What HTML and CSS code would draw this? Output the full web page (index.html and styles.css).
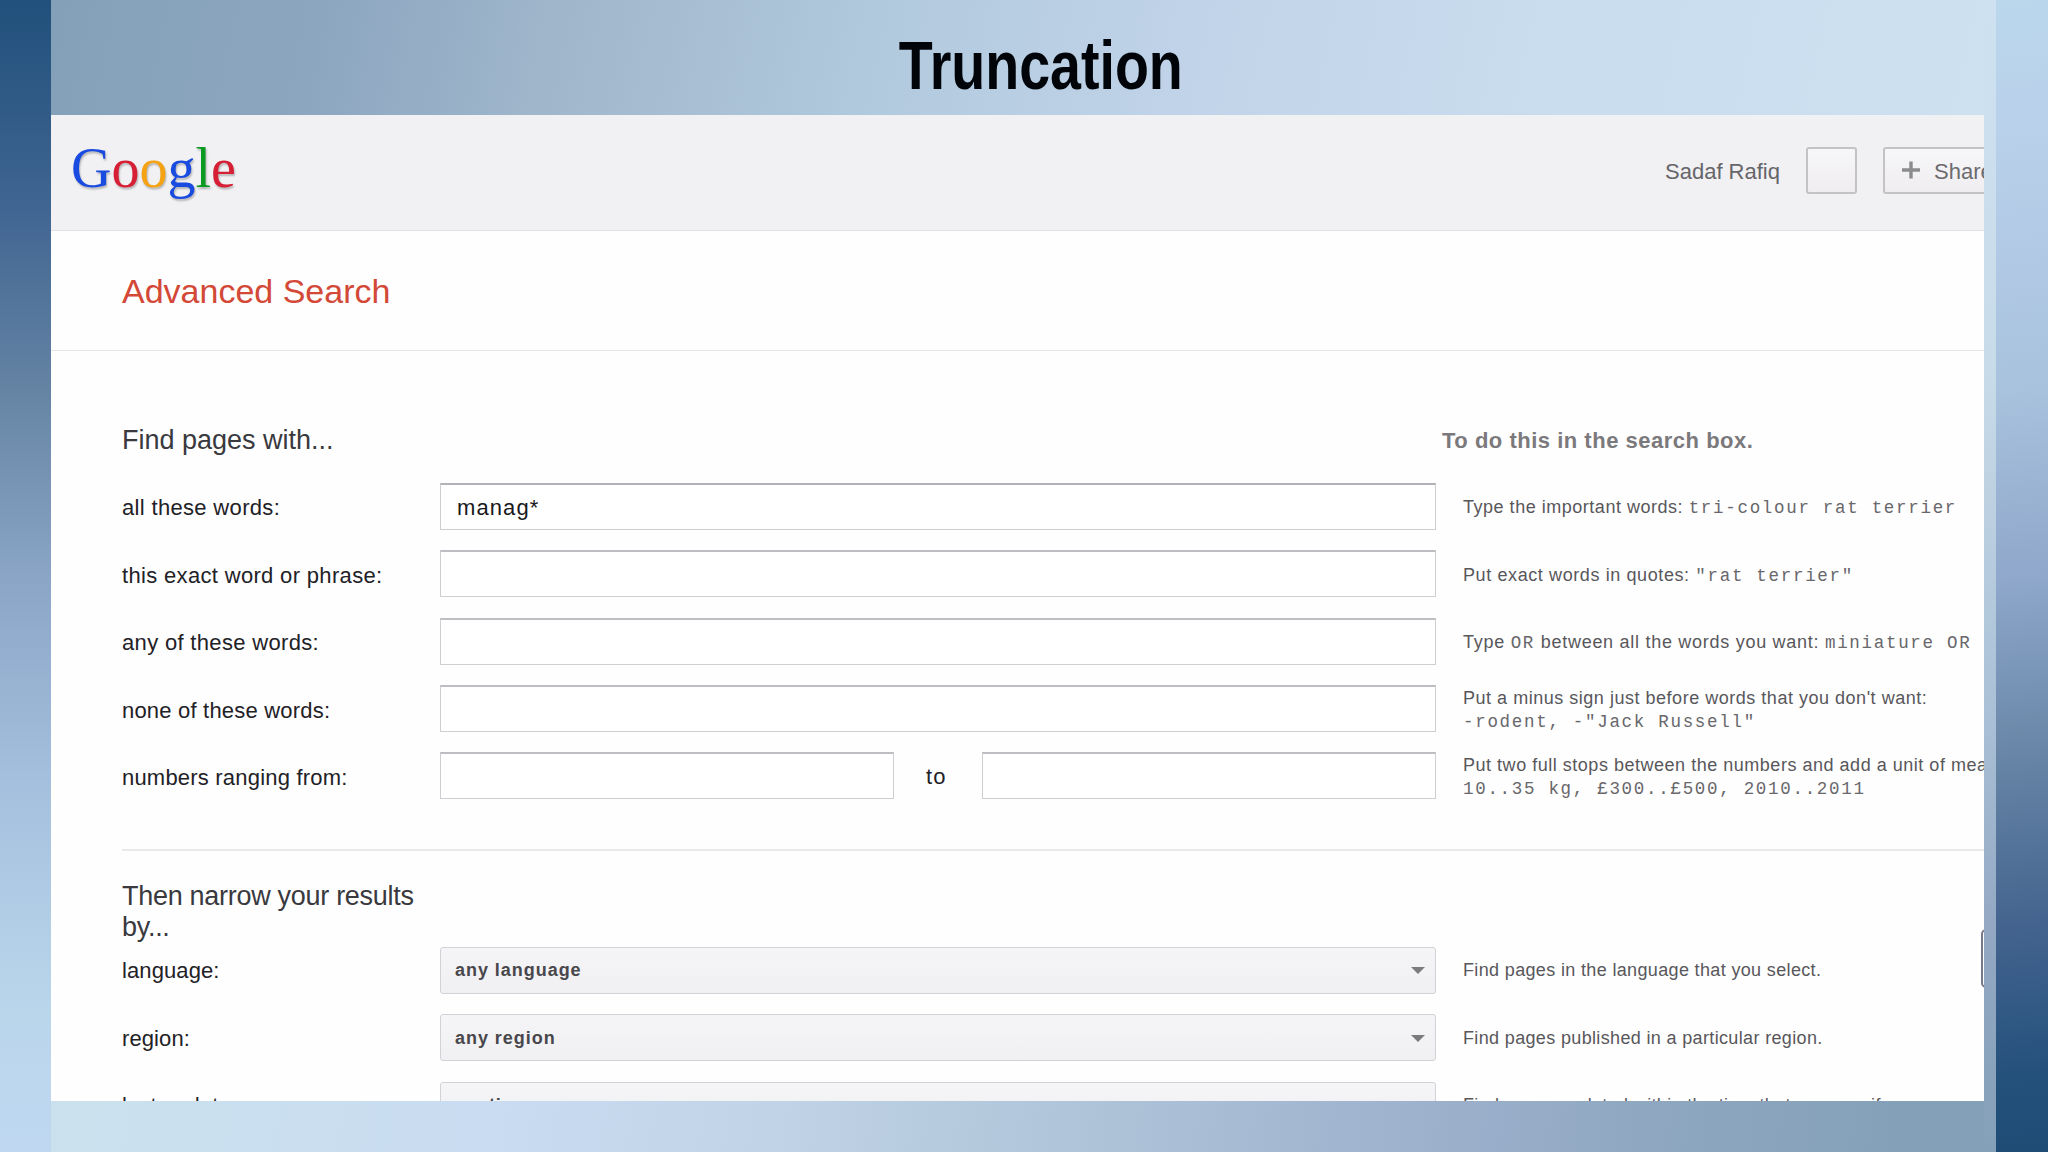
FILE: index.html
```html
<!DOCTYPE html>
<html lang="en">
<head>
    <meta charset="UTF-8">
    <title>Truncation</title>
    <link rel="stylesheet" href="styles.css">
</head>
<body>
    <div class="slide">
        <h1 class="slide-title"><span>Truncation</span></h1>

        <div class="browser">
            <header class="topbar">
                <div class="logo"><span class="blue">G</span><span class="red">o</span><span class="yellow">o</span><span class="blue">g</span><span class="green">l</span><span class="red">e</span></div>
                <div class="account">
                    <span class="user-name">Sadaf Rafiq</span>
                    <button class="top-btn notify"></button>
                    <button class="top-btn share">
                        <svg width="18" height="18" viewBox="0 0 18 18"><path d="M9 0.5v17M0 9h18" stroke="#8c8b8d" stroke-width="3.4" fill="none"/></svg>
                        Share
                    </button>
                </div>
            </header>

            <div class="page-title">
                <h2>Advanced Search</h2>
            </div>

            <main class="form">
                <div class="row row-heading">
                    <h3>Find pages with...</h3>
                    <div></div>
                    <p class="hint-heading">To do this in the search box.</p>
                </div>
                <div class="row">
                    <label class="ls-1">all these words:</label>
                    <div class="field focus">manag*</div>
                    <p class="hint">Type the important words: <code>tri-colour rat terrier</code></p>
                </div>
                <div class="row">
                    <label class="ls-1">this exact word or phrase:</label>
                    <div class="field"></div>
                    <p class="hint quotes">Put exact words in quotes: <code>"rat terrier"</code></p>
                </div>
                <div class="row">
                    <label class="ls-1">any of these words:</label>
                    <div class="field"></div>
                    <p class="hint wide">Type <code>OR</code> between all the words you want: <code>miniature OR</code></p>
                </div>
                <div class="row">
                    <label>none of these words:</label>
                    <div class="field"></div>
                    <p class="hint">Put a minus sign just before words that you don't want:<br><code>-rodent, -"Jack Russell"</code></p>
                </div>
                <div class="row">
                    <label>numbers ranging from:</label>
                    <div class="range">
                        <div class="field"></div>
                        <span>to</span>
                        <div class="field"></div>
                    </div>
                    <p class="hint">Put two full stops between the numbers and add a unit of measure:<br><code>10..35 kg, £300..£500, 2010..2011</code></p>
                </div>

                <div class="divider"></div>

                <h3 class="narrow">Then narrow your results by...</h3>
                <div class="row">
                    <label>language:</label>
                    <div class="select">any language <i class="arrow"></i></div>
                    <p class="hint tight">Find pages in the language that you select.</p>
                </div>
                <div class="row">
                    <label>region:</label>
                    <div class="select">any region <i class="arrow"></i></div>
                    <p class="hint tight">Find pages published in a particular region.</p>
                </div>
                <div class="row">
                    <label>last update:</label>
                    <div class="select">anytime <i class="arrow"></i></div>
                    <p class="hint tight">Find pages updated within the time that you specify.</p>
                </div>
            </main>
            <div class="side-tab"></div>
        </div>
    </div>
</body>
</html>
```
FILE: styles.css
```css
* {
    margin: 0;
    padding: 0;
    box-sizing: border-box;
}

body {
    width: 2048px;
    height: 1152px;
    overflow: hidden;
    padding: 0 52px 0 51px;
    font-family: "Liberation Sans", Arial, sans-serif;
    background:
        linear-gradient(180deg, #20507b 0%, #406592 18%, #6584a4 34%, #88a3c4 49%, #a5c0de 68%, #bad6eb 88%, #bfd7f1 100%) left / 51px 100% no-repeat,
        linear-gradient(174deg, #bad7ec 0%, #b9d0ea 12%, #a8c1dd 34%, #8fa8cb 50%, #6684a5 66%, #44648f 80%, #24517c 93%, #1f4c75 100%) right / 52px 100% no-repeat;
}

.slide {
    width: 1945px;
    height: 1152px;
    padding-right: 12px;
    background:
        linear-gradient(180deg, #cee1f1 0%, #c8dbe8 32%, #a8bfd5 63%, #94a8c3 80%, #84a0b8 100%) right / 12px 100% no-repeat,
        linear-gradient(102deg, #84a0b8 0%, #8da6c0 14%, #a1b8cc 27%, #b2cade 43%, #c0d3e8 58%, #c9dcee 75%, #cee1f1 100%) top / 100% 115px no-repeat,
        linear-gradient(97deg, #cae1ed 0%, #c9dcf1 22%, #c0d3e7 37%, #b0c5d9 52%, #9fb2ce 69%, #8fa7c1 82%, #84a0b8 95%) bottom / 100% 51px no-repeat;
}

.slide-title {
    height: 115px;
    padding-left: 46px;
    line-height: 130px;
    text-align: center;
    font-size: 68px;
    color: #01050a;
}

.slide-title span {
    display: inline-block;
    transform: scaleX(0.817);
}

.browser {
    position: relative;
    width: 1933px;
    height: 986px;
    overflow: hidden;
    background-color: #fefefe;
}

/* top bar */
.topbar {
    display: flex;
    justify-content: space-between;
    height: 116px;
    padding-left: 20px;
    background-color: #f1f0f2;
    border-bottom: 1px solid #e1e0e5;
}

.logo {
    padding-top: 21px;
    font-family: "Liberation Serif", "Times New Roman", serif;
    font-size: 56px;
    line-height: 64px;
    text-shadow: 1px 2px 2px rgba(0, 0, 0, 0.25);
}

.blue {
    color: #1a4be0;
}

.red {
    color: #d61f35;
}

.yellow {
    color: #f5a313;
}

.green {
    color: #0b9a22;
}

.account {
    display: flex;
    align-items: flex-start;
    width: 319px;
    flex-shrink: 0;
    padding-top: 32px;
    font-size: 22px;
    color: #66656a;
    white-space: nowrap;
}

.user-name {
    width: 141px;
    flex-shrink: 0;
    line-height: 50px;
}

.top-btn {
    height: 47px;
    flex-shrink: 0;
    border: 2px solid #c4c2c6;
    border-radius: 3px;
    background: linear-gradient(#f7f6f8, #efedf0);
    font: inherit;
    color: #6c6b6f;
}

.notify {
    width: 51px;
    margin-right: 26px;
}

.share {
    display: flex;
    align-items: center;
    gap: 14px;
    width: 120px;
    padding-left: 17px;
    padding-top: 2px;
}

.share svg {
    margin-top: -4px;
}

/* heading */
.page-title {
    height: 120px;
    padding-left: 71px;
    border-bottom: 1px solid #e4e4e9;
}

.page-title h2 {
    font-size: 34px;
    font-weight: normal;
    line-height: 121px;
    color: #d34836;
}

/* form */
.form {
    padding: 55px 0 0 71px;
}

.row {
    display: grid;
    grid-template-columns: 318px 996px 600px;
    align-items: center;
    height: 67.4px;
}

.row-heading {
    height: 66px;
    margin-bottom: 0.7px;
}

h3 {
    font-size: 27px;
    font-weight: normal;
    color: #39393e;
    line-height: 31px;
}

.row-heading h3,
.hint-heading {
    padding-top: 3px;
}

.hint-heading {
    padding-left: 6px;
    font-size: 22px;
    font-weight: bold;
    letter-spacing: 0.51px;
    color: #7b797c;
}

label {
    font-size: 22px;
    letter-spacing: 0.2px;
    color: #222126;
    padding-top: 4px;
}

.ls-1 {
    letter-spacing: 0.33px;
}

.field {
    height: 47px;
    border: 1px solid #cfcdd2;
    border-top: 2px solid #bfbdc1;
    background-color: #fff;
    padding-left: 16px;
    font-size: 22px;
    line-height: 46px;
    letter-spacing: 1.1px;
    color: #19181c;
}

.focus {
    border-top-color: #b3b1b6;
}

.range {
    display: grid;
    grid-template-columns: 454px 88px 454px;
    align-items: center;
    font-size: 22px;
    letter-spacing: 1.2px;
    color: #222126;
}

.range span {
    padding: 3px 0 0 32px;
}

.hint {
    padding: 3px 0 0 27px;
    font-size: 18px;
    line-height: 23px;
    letter-spacing: 0.52px;
    color: #58575b;
    white-space: nowrap;
}

.hint code {
    font-family: "Liberation Mono", "Courier New", monospace;
    font-size: 17.5px;
    letter-spacing: 1.7px;
    line-height: 20px;
    color: #68676b;
}

.quotes {
    letter-spacing: 0.6px;
}

.wide {
    letter-spacing: 0.72px;
}

.tight {
    padding-top: 1px;
    letter-spacing: 0.35px;
}

.divider {
    height: 2px;
    margin-top: 39px;
    background-color: #e9e9ec;
}

.narrow {
    width: 310px;
    margin-top: 29px;
    margin-bottom: -6px;
    padding-top: 1px;
    letter-spacing: -0.29px;
}

.narrow ~ .row label {
    padding-top: 2px;
    letter-spacing: 0.1px;
}

.select {
    display: flex;
    justify-content: space-between;
    align-items: center;
    height: 47px;
    padding: 1px 10px 0 14px;
    border: 1px solid #d3d1d6;
    border-radius: 3px;
    background: linear-gradient(#f5f4f6, #f0eff1);
    font-size: 18px;
    font-weight: bold;
    letter-spacing: 0.96px;
    color: #48474b;
}

.arrow {
    border: 7px solid transparent;
    border-top-color: #7b7a7d;
    border-bottom: none;
}

/* edge of the panel tucked behind the window border */
.side-tab {
    position: absolute;
    top: 814px;
    right: -12px;
    width: 15px;
    height: 59px;
    border: 2px solid #77788a;
    border-radius: 5px;
}
```
